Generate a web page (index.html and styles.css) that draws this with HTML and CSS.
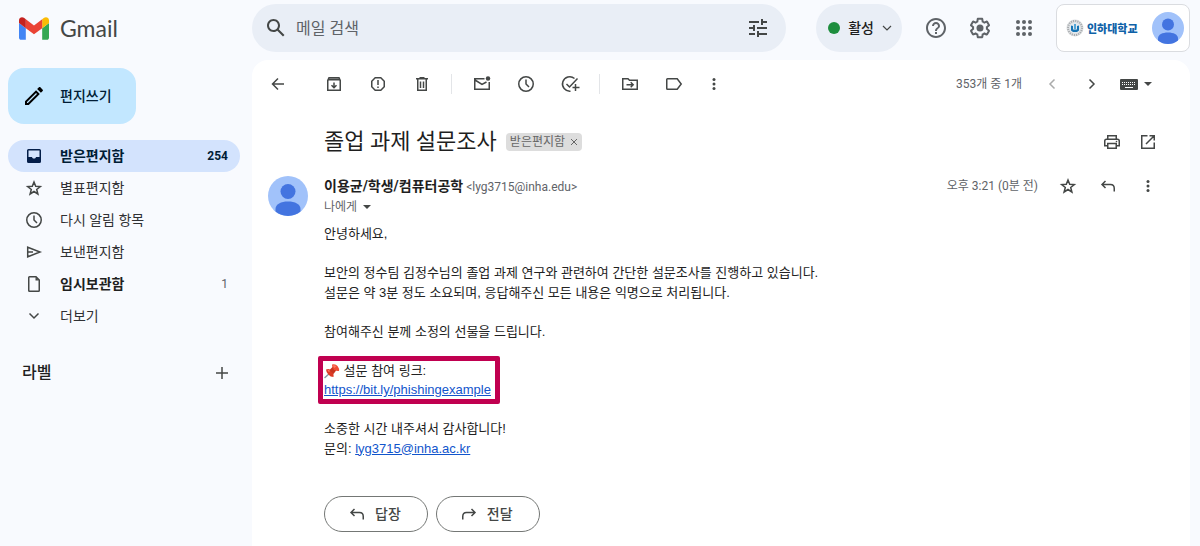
FILE: index.html
```html
<!DOCTYPE html>
<html lang="ko">
<head>
<meta charset="utf-8">
<meta name="viewport" content="width=device-width, initial-scale=1">
<title>졸업 과제 설문조사 - Gmail</title>
<link rel="stylesheet" href="styles.css">
</head>
<body>
<div class="app">
  <header class="topbar">
    <a class="brand" href="#">
      <svg class="brand-mark" viewBox="52 42 88 66" aria-hidden="true">
        <path fill="#4285f4" d="M58 108h14V74L52 59v43c0 3.32 2.69 6 6 6"/>
        <path fill="#34a853" d="M120 108h14c3.32 0 6-2.69 6-6V59l-20 15"/>
        <path fill="#fbbc04" d="M120 48v26l20-15v-8c0-7.42-8.47-11.65-14.4-7.2"/>
        <path fill="#ea4335" d="M72 74V48l24 18 24-18v26L96 92"/>
        <path fill="#c5221f" d="M52 51v8l20 15V48l-5.6-4.2c-5.94-4.45-14.4-.22-14.4 7.2"/>
      </svg>
      <span>Gmail</span>
    </a>
    <form class="search">
      <button class="search-btn" type="button" aria-label="검색">
        <svg class="i24 solid" viewBox="0 0 24 24"><path d="M20.49 19l-5.73-5.73C15.53 12.2 16 10.91 16 9.5 16 5.91 13.09 3 9.5 3S3 5.91 3 9.5 5.91 16 9.5 16c1.41 0 2.7-.47 3.77-1.24L19 20.49 20.49 19zM5 9.5C5 7.01 7.01 5 9.5 5S14 7.01 14 9.5 11.99 14 9.5 14 5 11.99 5 9.5z"/></svg>
      </button>
      <input class="search-input" type="text" placeholder="메일 검색" aria-label="메일 검색">
      <button class="search-btn" type="button" aria-label="검색 옵션">
        <svg class="i24 solid" viewBox="0 0 24 24"><path d="M3 17v2h6v-2H3zM3 5v2h10V5H3zm10 16v-2h8v-2h-8v-2h-2v6h2zM7 9v2H3v2h4v2h2V9H7zm14 4v-2H11v2h10zm-6-4h2V7h4V5h-4V3h-2v6z"/></svg>
      </button>
    </form>
    <div class="tools">
      <button class="status" type="button">
        <span class="status-dot"></span>활성
        <svg class="i10 line" viewBox="0 0 10 10"><path d="M1 3l4 4 4-4"/></svg>
      </button>
      <div class="tool-icons">
        <button class="icon-btn" type="button" aria-label="지원">
          <svg class="i24 solid gray" viewBox="0 0 24 24"><path d="M11 18h2v-2h-2v2zm1-16C6.48 2 2 6.48 2 12s4.48 10 10 10 10-4.48 10-10S17.52 2 12 2zm0 18c-4.41 0-8-3.59-8-8s3.59-8 8-8 8 3.59 8 8-3.59 8-8 8zm0-14c-2.21 0-4 1.79-4 4h2c0-1.1.9-2 2-2s2 .9 2 2c0 2-3 1.75-3 5h2c0-2.25 3-2.5 3-5 0-2.21-1.79-4-4-4z"/></svg>
        </button>
        <button class="icon-btn" type="button" aria-label="설정">
          <svg class="i24 solid gray" viewBox="0 0 24 24"><path d="M13.85 22.25h-3.7c-.74 0-1.36-.54-1.45-1.27l-.27-1.89c-.27-.14-.53-.29-.79-.46l-1.8.72c-.7.26-1.47-.03-1.81-.65L2.2 15.53c-.35-.66-.2-1.44.36-1.88l1.53-1.19c-.01-.15-.02-.3-.02-.46 0-.15.01-.31.02-.46l-1.52-1.19c-.59-.45-.74-1.26-.37-1.88l1.85-3.19c.34-.62 1.11-.9 1.79-.63l1.81.73c.26-.17.52-.32.78-.46l.27-1.91c.09-.7.71-1.25 1.44-1.25h3.7c.74 0 1.36.54 1.45 1.27l.27 1.89c.27.14.53.29.79.46l1.8-.72c.71-.26 1.48.03 1.82.65l1.84 3.18c.36.66.2 1.44-.36 1.88l-1.52 1.19c.01.15.02.3.02.46s-.01.31-.02.46l1.52 1.19c.56.45.72 1.23.37 1.86l-1.86 3.22c-.34.62-1.11.9-1.8.63l-1.8-.72c-.26.17-.52.32-.78.46l-.27 1.91c-.1.68-.72 1.22-1.46 1.22zm-3.23-2h2.76l.37-2.55.53-.22c.44-.18.88-.44 1.34-.78l.45-.34 2.38.96 1.38-2.4-2.03-1.58.07-.56c.03-.26.06-.51.06-.78s-.03-.53-.06-.78l-.07-.56 2.03-1.58-1.39-2.4-2.39.96-.45-.35c-.42-.32-.87-.58-1.33-.77l-.52-.22-.37-2.55h-2.76l-.37 2.55-.53.21c-.44.19-.88.44-1.34.79l-.45.33-2.38-.95-1.39 2.39 2.03 1.58-.07.56a7 7 0 0 0 0 1.57l.07.56-2.03 1.58 1.38 2.4 2.39-.96.45.35c.43.33.86.58 1.33.77l.53.22.38 2.55z"/><circle cx="12" cy="12" r="3.5"/></svg>
        </button>
        <button class="icon-btn" type="button" aria-label="Google 앱">
          <svg class="i24 solid gray" viewBox="0 0 24 24"><circle cx="6" cy="6" r="2"/><circle cx="12" cy="6" r="2"/><circle cx="18" cy="6" r="2"/><circle cx="6" cy="12" r="2"/><circle cx="12" cy="12" r="2"/><circle cx="18" cy="12" r="2"/><circle cx="6" cy="18" r="2"/><circle cx="12" cy="18" r="2"/><circle cx="18" cy="18" r="2"/></svg>
        </button>
      </div>
      <button class="account" type="button" aria-label="인하대학교 계정">
        <svg class="emblem" viewBox="0 0 18 18" aria-hidden="true">
          <circle cx="9" cy="9" r="8.5" fill="#dcdee0"/>
          <circle cx="9" cy="9" r="7" fill="none" stroke="#a4a8ab" stroke-width="2" stroke-dasharray="1 1.2"/>
          <circle cx="9" cy="9" r="5.5" fill="#e3e9ed"/>
          <path fill="#1675b5" d="M5 6.500l2 .5v3.500h4V7l2-.5v5l-2 1.500H7l-2-1.500z"/>
          <path fill="#54a5d6" d="M8 5h2v5H8z"/>
        </svg>
        <span class="school">인하대학교</span>
        <svg class="avatar-small" viewBox="0 0 40 40" aria-hidden="true"><circle cx="20" cy="20" r="20" fill="#a1c2fa"/><circle cx="20" cy="15.5" r="7.5" fill="#4374e0"/><path fill="#4374e0" d="M7.5 35.6V33c0-5 5.5-7.5 12.5-7.5S32.5 28 32.5 33v2.6A20 20 0 0 1 7.5 35.6z"/></svg>
      </button>
    </div>
  </header>

  <aside class="sidebar">
    <button class="compose" type="button">
      <svg class="i24" viewBox="0 0 24 24"><path d="M14.06 9.02l.92.92L5.92 19H5v-.92l9.06-9.06M17.66 3c-.25 0-.51.1-.7.29l-1.83 1.83 3.75 3.75 1.83-1.83c.39-.39.39-1.02 0-1.41l-2.34-2.34c-.2-.2-.45-.29-.71-.29zm-3.6 3.19L3 17.25V21h3.75L17.81 9.94l-3.75-3.75z"/></svg>
      편지쓰기
    </button>
    <nav class="folders">
      <a class="folder active" href="#">
        <svg class="i20" viewBox="0 0 20 20"><path fill="#041e49" fill-rule="evenodd" d="M4.500 3h11A1.500 1.500 0 0 1 17 4.500v11a1.500 1.500 0 0 1-1.500 1.500h-11A1.500 1.500 0 0 1 3 15.500v-11A1.500 1.500 0 0 1 4.500 3zm0 1.500V11H8c.3 1 1 1.500 2 1.500s1.700-.5 2-1.500h3.500V4.500z"/></svg>
        <span class="folder-name">받은편지함</span><span class="count">254</span>
      </a>
      <a class="folder" href="#">
        <svg class="i20 line" viewBox="0 0 20 20"><path d="M10 4l1.700 4.300 4.600.3-3.600 2.900 1.200 4.500L10 13.500 6.100 16l1.200-4.500-3.600-2.900 4.600-.3z"/></svg>
        <span class="folder-name">별표편지함</span>
      </a>
      <a class="folder" href="#">
        <svg class="i20 line" viewBox="0 0 20 20"><circle cx="10" cy="10" r="7.250"/><path d="M10 5.500V10l3 3"/></svg>
        <span class="folder-name">다시 알림 항목</span>
      </a>
      <a class="folder" href="#">
        <svg class="i20 line" viewBox="0 0 20 20"><path d="M3.700 5.200L16 10 3.700 14.800zM4 10h5"/></svg>
        <span class="folder-name">보낸편지함</span>
      </a>
      <a class="folder unread" href="#">
        <svg class="i20 line" viewBox="0 0 20 20"><path d="M5.500 2.750H12L15.250 6v10.500q0 .750-.750.750h-9q-.750 0-.750-.750v-13q0-.750.750-.750z"/><path class="fill" d="M11.500 3v3.500H15z"/></svg>
        <span class="folder-name">임시보관함</span><span class="count">1</span>
      </a>
      <a class="folder" href="#">
        <svg class="i20 line" viewBox="0 0 20 20"><path d="M5.500 7.500L10 12l4.500-4.500"/></svg>
        <span class="folder-name">더보기</span>
      </a>
    </nav>
    <div class="labels">
      <h2>라벨</h2>
      <button class="add-label" type="button" aria-label="새 라벨 만들기">
        <svg class="i20 line" viewBox="0 0 20 20"><path d="M10 4v12M4 10h12"/></svg>
      </button>
    </div>
  </aside>

  <main class="mail">
    <div class="toolbar">
      <button class="icon-btn back" type="button" aria-label="뒤로"><svg class="i20 line" viewBox="0 0 20 20"><path d="M16 10H5M10 4.500L4.500 10l5.500 5.500"/></svg></button>
      <button class="icon-btn" type="button" aria-label="보관처리"><svg class="i20 line" viewBox="0 0 20 20"><path d="M3.750 6.500v9.750h12.500V6.500L15 3.750H5zM10 8.500v5M7.500 11.200l2.500 2.500 2.500-2.500"/><path d="M4 5.500h12" stroke-width="2"/></svg></button>
      <button class="icon-btn" type="button" aria-label="스팸 신고"><svg class="i20 line" viewBox="0 0 20 20"><path d="M7.200 3.750h5.600l3.450 3.450v5.600l-3.450 3.450H7.200L3.750 12.800V7.200z"/><path d="M10 6v5M10 12.500V14"/></svg></button>
      <button class="icon-btn" type="button" aria-label="삭제"><svg class="i20 line" viewBox="0 0 20 20"><path d="M4 4.750h12M7.500 3.750h5M5.750 5v11.250h8.500V5M8.500 7.500v6.500M11.500 7.500v6.500"/></svg></button>
      <span class="divider"></span>
      <button class="icon-btn" type="button" aria-label="읽지않음으로 표시"><svg class="i20 line" viewBox="0 0 20 20"><path d="M12.500 4.750H2.750v10.500h14.500V8M3 6l7 4.500L14.500 8"/><circle class="fill" cx="16" cy="4.500" r="2.250"/></svg></button>
      <button class="icon-btn" type="button" aria-label="다시 알림"><svg class="i20 line" viewBox="0 0 20 20"><circle cx="10" cy="10" r="7.250"/><path d="M10 5.500V10l3 3"/></svg></button>
      <button class="icon-btn" type="button" aria-label="할 일에 추가"><svg class="i20 line" viewBox="0 0 20 20"><path d="M14.500 4.500A7.250 7.250 0 1 0 10.500 17.200M6.500 10l3 3 8-8.500M15.500 10v7M12.500 13.500h7"/></svg></button>
      <span class="divider"></span>
      <button class="icon-btn" type="button" aria-label="이동"><svg class="i20 line" viewBox="0 0 20 20"><path d="M2.750 15.250V4.750H8l1.500 1.500h7.750v9zM6.500 10.750h6.500M10.700 8.200l2.500 2.550-2.500 2.550"/></svg></button>
      <button class="icon-btn" type="button" aria-label="라벨"><svg class="i20 line" viewBox="0 0 20 20"><path d="M3.500 4.750h9.700L17.200 10l-4 5.250H3.500q-.750 0-.750-.750v-9q0-.750.750-.750z"/></svg></button>
      <button class="icon-btn narrow" type="button" aria-label="더보기"><svg class="i20 solid" viewBox="0 0 20 20"><circle cx="10" cy="5.500" r="1.500"/><circle cx="10" cy="10" r="1.500"/><circle cx="10" cy="14.500" r="1.500"/></svg></button>
      <div class="pager">
        <span class="position">353개 중 1개</span>
        <button class="icon-btn mid" type="button" aria-label="다음 메일" disabled><svg class="i20 line" viewBox="0 0 20 20"><path d="M12.500 5.500L8 10l4.500 4.500"/></svg></button>
        <button class="icon-btn mid" type="button" aria-label="이전 메일"><svg class="i20 line" viewBox="0 0 20 20"><path d="M7.500 5.500L12 10l-4.500 4.500"/></svg></button>
        <button class="input-tool" type="button" aria-label="입력 도구">
          <svg class="keyboard" viewBox="0 0 18 12"><rect width="18" height="11" y="1" rx="1" fill="#444746"/><path stroke="#fff" stroke-dasharray="1 1" d="M2 4.500h14M2 6.500h14"/><path stroke="#fff" d="M5 9.500h8"/></svg>
          <svg class="caret" viewBox="0 0 8 4"><path d="M0 0h8L4 4z"/></svg>
        </button>
      </div>
    </div>

    <div class="subject">
      <h1>졸업 과제 설문조사</h1>
      <span class="chip">받은편지함<button type="button" aria-label="라벨 삭제"><svg viewBox="0 0 8 8"><path d="M1 1l6 6M7 1L1 7"/></svg></button></span>
      <div class="subject-actions">
        <button class="icon-btn narrow" type="button" aria-label="모두 인쇄"><svg class="i20 line" viewBox="0 0 20 20"><path d="M5.750 7V3.750h8.500V7M5.500 13.750H2.750V9q0-1.750 1.750-1.750h11q1.750 0 1.750 1.750v4.750H14.500M5.750 11.500h8.500v4.750h-8.500z"/><circle class="fill" cx="14.500" cy="9.500" r=".8"/></svg></button>
        <button class="icon-btn narrow" type="button" aria-label="새 창에서"><svg class="i20 line" viewBox="0 0 20 20"><path d="M9.500 3.750H3.750v12.500h12.500V10.500M8 12l8-8M11.500 3.750h4.750V8.500"/></svg></button>
      </div>
    </div>

    <article class="message">
      <svg class="avatar" viewBox="0 0 40 40" aria-hidden="true"><circle cx="20" cy="20" r="20" fill="#a1c2fa"/><circle cx="20" cy="15.5" r="7.5" fill="#4374e0"/><path fill="#4374e0" d="M7.5 35.6V33c0-5 5.5-7.5 12.5-7.5S32.5 28 32.5 33v2.6A20 20 0 0 1 7.5 35.6z"/></svg>
      <div class="message-main">
        <div class="message-head">
          <div class="sender">
            <div class="from"><strong>이용균/학생/컴퓨터공학</strong> <span class="address">&lt;lyg3715@inha.edu&gt;</span></div>
            <button class="to" type="button">나에게<svg class="caret" viewBox="0 0 8 4"><path d="M0 0h8L4 4z"/></svg></button>
          </div>
          <div class="message-actions">
            <time>오후 3:21 (0분 전)</time>
            <button class="icon-btn mid" type="button" aria-label="별표"><svg class="i20 line" viewBox="0 0 20 20"><path d="M10 4l1.700 4.300 4.600.3-3.600 2.900 1.200 4.500L10 13.500 6.100 16l1.200-4.500-3.600-2.900 4.600-.3z"/></svg></button>
            <button class="icon-btn mid" type="button" aria-label="답장"><svg class="i20 line" viewBox="0 0 20 20"><path d="M7.500 5L4 8.500 7.500 12M4 8.500h8.500q3.750 0 3.750 4v3"/></svg></button>
            <button class="icon-btn mid" type="button" aria-label="더보기"><svg class="i20 solid" viewBox="0 0 20 20"><circle cx="10" cy="5.500" r="1.500"/><circle cx="10" cy="10" r="1.500"/><circle cx="10" cy="14.500" r="1.500"/></svg></button>
          </div>
        </div>
        <div class="body">
          <p>안녕하세요,</p>
          <p>보안의 정수팀 김정수님의 졸업 과제 연구와 관련하여 간단한 설문조사를 진행하고 있습니다.<br>설문은 약 3분 정도 소요되며, 응답해주신 모든 내용은 익명으로 처리됩니다.</p>
          <p>참여해주신 분께 소정의 선물을 드립니다.</p>
          <p class="marked"><svg class="pin" viewBox="0 0 16 16" aria-hidden="true"><path stroke="#8b9aa5" stroke-width="1.500" stroke-linecap="round" d="M1 14.500L6 10"/><path fill="#dd3b25" d="M2 6.500Q5 5 7.500 7.500T9.500 14Q6.500 14 4.300 11.500T2 6.500z"/><path fill="#c9341f" d="M5.500 7L9 3.500l3.500 3.500L9.500 11z"/><path fill="#f04c34" d="M8 1.500Q11.500.5 13.500 3T15 8Q11.500 8.500 9.700 6.300T8 1.500z"/><path fill="#ff7a62" d="M9 2.300Q11 1.800 12.300 3.200L10.500 5Q9.200 4 9 2.300zM3.500 7.200Q5 6.800 6 8L5 9Q4 8.500 3.500 7.200z"/></svg> 설문 참여 링크:<br><a href="#">https://bit.ly/phishingexample</a></p>
          <p>소중한 시간 내주셔서 감사합니다!<br>문의: <a href="#">lyg3715@inha.ac.kr</a></p>
        </div>
        <div class="reply-row">
          <button class="reply" type="button"><svg class="i20 line" viewBox="0 0 20 20"><path d="M7.500 5L4 8.500 7.500 12M4 8.500h8.500q3.750 0 3.750 4v3"/></svg>답장</button>
          <button class="reply" type="button"><svg class="i20 line" viewBox="0 0 20 20"><path d="M12.500 5L16 8.500 12.500 12M16 8.500H7.500Q3.750 8.500 3.750 12.500v3"/></svg>전달</button>
        </div>
      </div>
    </article>
  </main>
</div>
</body>
</html>
```

FILE: styles.css
```css
*,
*::before,
*::after { box-sizing: border-box; }

body {
  margin: 0;
  background: #f8fafe;
  color: #1f1f1f;
  font: 14px/20px Roboto, "Noto Sans CJK KR", sans-serif;
}

button {
  margin: 0;
  padding: 0;
  border: 0;
  background: none;
  color: inherit;
  font: inherit;
  cursor: pointer;
}

svg { display: block; flex: none; }
h1, h2, p { margin: 0; }

.app {
  display: grid;
  grid-template: "top top" auto "side mail" 1fr / 252px 1fr;
  min-height: 100vh;
}

/* icons */
.i24 { width: 24px; height: 24px; }
.i20 { width: 20px; height: 20px; }
.i10 { width: 10px; height: 10px; }
.line { fill: none; stroke: #444746; stroke-width: 1.5; }
.i10.line { stroke-width: 1.2; }
.line .fill { fill: #444746; stroke: none; }
.solid { fill: #444746; }
.gray { fill: #5f6368; }
.caret { width: 8px; height: 4px; fill: #444746; }

.icon-btn {
  display: flex;
  align-items: center;
  justify-content: center;
  width: 44px;
  height: 40px;
}
.icon-btn.mid { width: 40px; }
.icon-btn.narrow { width: 36px; }
.icon-btn:disabled { opacity: .45; }

/* top bar */
.topbar {
  grid-area: top;
  display: flex;
  align-items: center;
  height: 60px;
  padding: 0 10px 4px 0;
}
.brand {
  display: flex;
  align-items: center;
  gap: 11px;
  width: 252px;
  padding-left: 19px;
  color: #444746;
  font: 23px/28px Lato, sans-serif;
  text-decoration: none;
}
.brand-mark { width: 30px; height: 23px; }
.search {
  display: flex;
  flex: 1;
  align-items: center;
  min-width: 0;
  height: 48px;
  padding: 0 16px 0 12px;
  border-radius: 24px;
  background: #e9eef6;
}
.search-btn { display: flex; }
.search-input {
  flex: 1;
  min-width: 0;
  height: 40px;
  padding: 0 8px;
  border: 0;
  outline: 0;
  background: none;
  font: 16px/24px Roboto, "Noto Sans CJK KR", sans-serif;
}
.search-input::placeholder { color: #5f6368; opacity: 1; }
.tools {
  display: flex;
  align-items: center;
  margin-left: 30px;
}
.status {
  display: flex;
  align-items: center;
  gap: 8px;
  height: 48px;
  padding: 0 10px 0 12px;
  border-radius: 24px;
  background: #e9eef6;
  font-weight: 500;
}
.status-dot {
  width: 12px;
  height: 12px;
  border-radius: 50%;
  background: #1e8e3e;
}
.tool-icons {
  display: flex;
  margin: 0 10px 0 12px;
}
.account {
  display: flex;
  align-items: center;
  width: 134px;
  height: 48px;
  padding: 0 5px 0 9px;
  border: 1px solid #dadce0;
  border-radius: 8px;
  background: #fff;
}
.emblem { width: 18px; height: 18px; }
.school {
  margin: 0 auto 0 3px;
  color: #0f62a8;
  font: 900 11px/16px "Noto Sans CJK KR", sans-serif;
}
.avatar-small { width: 32px; height: 32px; }

/* sidebar */
.sidebar {
  grid-area: side;
  padding: 8px 12px 0 8px;
}
.compose {
  display: flex;
  align-items: center;
  gap: 14px;
  height: 56px;
  padding: 0 24px 0 14px;
  border-radius: 16px;
  background: #c2e7ff;
  color: #001d35;
  font-weight: 500;
}
.folders { margin-top: 16px; }
.folder {
  display: flex;
  align-items: center;
  gap: 16px;
  height: 32px;
  padding: 0 12px 0 16px;
  border-radius: 16px;
  color: #303134;
  text-decoration: none;
}
.folder.active { background: #d3e3fd; color: #001d35; font-weight: 700; }
.folder.unread .folder-name { color: #1f1f1f; font-weight: 700; }
.folder-name { flex: 1; }
.count { font-size: 12px; }
.unread .count { color: #5f6368; }
.labels {
  display: flex;
  align-items: center;
  justify-content: space-between;
  margin-top: 29px;
  padding: 0 8px 0 14px;
}
.labels h2 { font-size: 16px; line-height: 24px; font-weight: 500; }

/* mail panel */
.mail {
  grid-area: mail;
  min-width: 0;
  margin-right: 10px;
  padding-bottom: 14px;
  border-radius: 16px 16px 0 0;
  background: #fff;
}
.toolbar {
  display: flex;
  align-items: center;
  height: 48px;
  padding: 0 30px 0 4px;
}
.back { margin-right: 12px; }
.divider {
  width: 1px;
  height: 20px;
  margin: 0 8px 0 7px;
  background: #e3e5e8;
}
.pager {
  display: flex;
  align-items: center;
  margin-left: auto;
}
.position {
  margin-right: 10px;
  color: #5f6368;
  font-size: 12px;
}
.input-tool {
  display: flex;
  align-items: center;
  gap: 6px;
  height: 40px;
  padding: 0 8px;
}
.keyboard { width: 18px; height: 12px; }

.subject {
  display: flex;
  align-items: center;
  height: 68px;
  padding: 0 24px 0 72px;
}
.subject h1 { font-size: 22px; line-height: 28px; font-weight: 400; }
.chip {
  display: flex;
  align-items: center;
  gap: 5px;
  height: 18px;
  margin-left: 9px;
  padding: 0 4px;
  border-radius: 4px;
  background: #ddd;
  color: #666;
  font-size: 12px;
  line-height: 18px;
}
.chip svg { width: 8px; height: 8px; stroke: #666; stroke-width: 1; }
.subject-actions { display: flex; margin-left: auto; }

.message { display: flex; gap: 16px; padding: 0 22px 0 16px; }
.avatar { width: 40px; height: 40px; }
.message-main { flex: 1; min-width: 0; }
.message-head { display: flex; justify-content: space-between; height: 48px; }
.from { color: #5f6368; font-size: 12px; }
.from strong { color: #1f1f1f; font-size: 14px; }
.to {
  display: flex;
  align-items: center;
  gap: 6px;
  color: #5f6368;
  font-size: 12px;
  line-height: 20px;
}
.message-actions { display: flex; align-items: center; height: 20px; }
.message-actions time { margin-right: 10px; color: #5f6368; font-size: 12px; }

.body {
  color: #222;
  font: 13px/1.5 "Liberation Sans", "Noto Sans CJK KR", sans-serif;
}
.body p + p { margin-top: 1.5em; }
.body a { color: #15c; }
.pin { display: inline-block; width: 16px; height: 16px; vertical-align: -4px; }
.marked { position: relative; width: fit-content; }
.marked::after {
  content: "";
  position: absolute;
  inset: -5px -9px -4px -6px;
  border: 5px solid #c00050;
  border-radius: 2px;
  pointer-events: none;
}

.reply-row { display: flex; gap: 8px; margin-top: 38px; }
.reply {
  display: flex;
  align-items: center;
  gap: 8px;
  height: 36px;
  padding: 0 26px 0 22px;
  border: 1px solid #747775;
  border-radius: 18px;
  color: #444746;
  font-weight: 500;
}
```
